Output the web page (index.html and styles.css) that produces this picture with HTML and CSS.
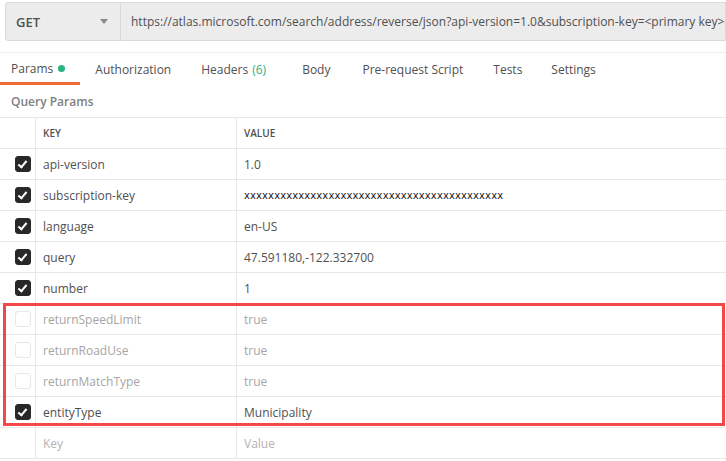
FILE: index.html
```html
<!DOCTYPE html>
<html>
<head>
<meta charset="utf-8">
<link rel="stylesheet" href="styles.css">
</head>
<body>
<div class="request-bar">
  <div class="method"><span>GET</span><span class="caret"></span></div>
  <div class="url">https://atlas.microsoft.com/search/address/reverse/json?api-version=1.0&amp;subscription-key=&lt;primary key&gt;&amp;language=en-US</div>
</div>
<div class="tabs">
  <div class="tab active">Params<span class="dot"></span></div>
  <div class="tab t-auth">Authorization</div>
  <div class="tab t-headers">Headers <span class="count">(6)</span></div>
  <div class="tab t-body">Body</div>
  <div class="tab t-pre">Pre-request Script</div>
  <div class="tab t-tests">Tests</div>
  <div class="tab t-settings">Settings</div>
</div>
<div class="section-title">Query Params</div>
<div class="table">
  <div class="row head"><div class="cell"></div><div class="cell">KEY</div><div class="cell">VALUE</div></div>
  <div class="row"><div class="cell"><span class="check on"></span></div><div class="cell">api-version</div><div class="cell">1.0</div></div>
  <div class="row"><div class="cell"><span class="check on"></span></div><div class="cell">subscription-key</div><div class="cell xs">xxxxxxxxxxxxxxxxxxxxxxxxxxxxxxxxxxxxxxxxxxx</div></div>
  <div class="row"><div class="cell"><span class="check on"></span></div><div class="cell">language</div><div class="cell">en-US</div></div>
  <div class="row"><div class="cell"><span class="check on"></span></div><div class="cell">query</div><div class="cell">47.591180,-122.332700</div></div>
  <div class="row"><div class="cell"><span class="check on"></span></div><div class="cell">number</div><div class="cell">1</div></div>
  <div class="highlight">
    <div class="row off"><div class="cell"><span class="check"></span></div><div class="cell">returnSpeedLimit</div><div class="cell">true</div></div>
    <div class="row off"><div class="cell"><span class="check"></span></div><div class="cell">returnRoadUse</div><div class="cell">true</div></div>
    <div class="row off"><div class="cell"><span class="check"></span></div><div class="cell">returnMatchType</div><div class="cell">true</div></div>
    <div class="row"><div class="cell"><span class="check on"></span></div><div class="cell">entityType</div><div class="cell">Municipality</div></div>
  </div>
  <div class="row placeholder"><div class="cell"></div><div class="cell">Key</div><div class="cell">Value</div></div>
</div>
</body>
</html>
```
FILE: styles.css
```css
html, body {
  margin: 0;
  padding: 0;
  background: #ffffff;
  overflow: hidden;
}
body {
  font-family: "Open Sans", "Liberation Sans", sans-serif;
  font-size: 12px;
  color: #505050;
  width: 726px;
  height: 461px;
}
.request-bar {
  display: flex;
  padding: 2px 0 0 5px;
  height: 39px;
}
.method {
  box-sizing: border-box;
  width: 116px;
  height: 39px;
  background: #ececec;
  border: 1px solid #d9d9d9;
  border-radius: 3px 0 0 3px;
  display: flex;
  align-items: center;
  justify-content: space-between;
  padding: 0 12px 0 10px;
  font-size: 13px;
  font-weight: 600;
  color: #505050;
}
.caret {
  width: 0;
  height: 0;
  border-left: 4px solid transparent;
  border-right: 4px solid transparent;
  border-top: 5px solid #8a8a8a;
}
.url {
  flex: 1;
  box-sizing: border-box;
  height: 39px;
  background: #ececec;
  border: 1px solid #d9d9d9;
  border-left: none;
  display: flex;
  align-items: center;
  padding-left: 10px;
  white-space: nowrap;
  overflow: hidden;
  font-size: 12px;
  color: #505050;
}
.tabs {
  margin-top: 11px;
  border-top: 1px solid #ededed;
  display: flex;
  height: 32px;
}
.tab {
  box-sizing: border-box;
  height: 32px;
  display: flex;
  align-items: center;
  padding: 0;
  color: #505050;
  white-space: nowrap;
}
.t-auth { margin-left: 15px; }
.t-headers { margin-left: 30px; }
.t-body { margin-left: 36px; }
.t-pre { margin-left: 32px; }
.t-tests { margin-left: 30px; }
.t-settings { margin-left: 29px; }
.tab.active {
  padding: 2px 15px 0 11px;
  border-bottom: 3px solid #f26b3a;
}
.dot {
  display: inline-block;
  width: 7px;
  height: 7px;
  border-radius: 50%;
  background: #26b47f;
  margin-left: 5px;
}
.count {
  color: #26b47f;
  margin-left: 4px;
}
.section-title {
  height: 32px;
  display: flex;
  align-items: center;
  padding-left: 11px;
  font-weight: 600;
  color: #808080;
}
.table {
  border-top: 1px solid #e8e8e8;
}
.row {
  display: grid;
  grid-template-columns: 35px 201px 1fr;
  height: 31px;
  box-sizing: border-box;
  border-bottom: 1px solid #e8e8e8;
}
.cell {
  display: flex;
  align-items: center;
  padding-left: 7px;
  border-left: 1px solid #e8e8e8;
  white-space: nowrap;
  overflow: hidden;
  color: #505050;
}
.cell:first-child {
  border-left: none;
  padding-left: 15px;
}
.row.head .cell {
  font-size: 10px;
  font-weight: 600;
  color: #505050;
}
.check {
  box-sizing: border-box;
  width: 16px;
  height: 16px;
  border-radius: 3px;
  border: 1px solid #e6e6e6;
  background: #fff;
  position: relative;
}
.check.on {
  background: #282828;
  border-color: #282828;
}
.check.on::after {
  content: "";
  position: absolute;
  left: 4px;
  top: 2px;
  width: 3px;
  height: 7px;
  border-right: 2px solid #fff;
  border-bottom: 2px solid #fff;
  transform: rotate(40deg);
}
.row.off .cell {
  color: #a6a6a6;
}
.row.placeholder .cell {
  color: #b3b3b3;
}
.xs {
  font-family: "DejaVu Sans", sans-serif;
  font-size: 10px;
  letter-spacing: 0.11px;
  color: #202020;
}
.highlight {
  position: relative;
}
.highlight::after {
  content: "";
  position: absolute;
  left: 3px;
  right: 1px;
  top: -1px;
  bottom: 2px;
  border: 3px solid #f44848;
  pointer-events: none;
}
```
